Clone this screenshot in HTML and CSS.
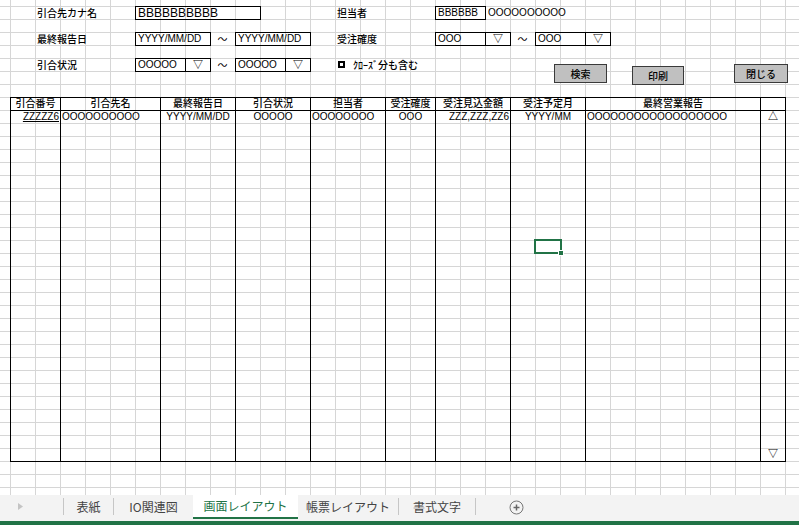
FILE: index.html
```html
<!DOCTYPE html>
<html lang="ja">
<head>
<meta charset="utf-8">
<title>画面レイアウト</title>
<link rel="stylesheet" href="styles.css">
</head>
<body>
<div class="app">
  <div class="sheet">
    <div class="lbl r1 c-left">引合先カナ名</div>
    <div class="box r1 kana big">BBBBBBBBBB</div>
    <div class="lbl r1 c-right">担当者</div>
    <div class="box r1 tanto">BBBBBB</div>
    <div class="txt r1 tanto-name">OOOOOOOOOO</div>

    <div class="lbl r2 c-left">最終報告日</div>
    <div class="box r2 from">YYYY/MM/DD</div>
    <div class="tilde r2 t-left">～</div>
    <div class="box r2 to">YYYY/MM/DD</div>
    <div class="lbl r2 c-right">受注確度</div>
    <div class="box drop r2 from2"><span class="val">OOO</span><span class="arr">▽</span></div>
    <div class="tilde r2 t-right">～</div>
    <div class="box drop r2 to2"><span class="val">OOO</span><span class="arr">▽</span></div>

    <div class="lbl r3 c-left">引合状況</div>
    <div class="box drop r3 from"><span class="val">OOOOO</span><span class="arr">▽</span></div>
    <div class="tilde r3 t-left">～</div>
    <div class="box drop r3 to"><span class="val">OOOOO</span><span class="arr">▽</span></div>
    <div class="lbl r3 check"><span class="cb"></span>ｸﾛｰｽﾞ分も含む</div>

    <button class="btn btn-search">検索</button>
    <button class="btn btn-print">印刷</button>
    <button class="btn btn-close">閉じる</button>

    <div class="list">
      <div class="col w50"><div class="th">引合番号</div><div class="td right"><span class="link">ZZZZZ6</span></div></div>
      <div class="col w100"><div class="th">引合先名</div><div class="td">OOOOOOOOOO</div></div>
      <div class="col w75"><div class="th">最終報告日</div><div class="td center">YYYY/MM/DD</div></div>
      <div class="col w75"><div class="th">引合状況</div><div class="td center">OOOOO</div></div>
      <div class="col w75"><div class="th">担当者</div><div class="td">OOOOOOOO</div></div>
      <div class="col w50"><div class="th">受注確度</div><div class="td center">OOO</div></div>
      <div class="col w75"><div class="th">受注見込金額</div><div class="td right">ZZZ,ZZZ,ZZ6</div></div>
      <div class="col w75"><div class="th">受注予定月</div><div class="td center">YYYY/MM</div></div>
      <div class="col w175"><div class="th">最終営業報告</div><div class="td">OOOOOOOOOOOOOOOOOO</div></div>
      <div class="col last"><div class="th"></div><div class="td center">△</div><div class="fill"></div><div class="td center">▽</div></div>
    </div>

    <div class="selected"><span class="handle"></span></div>
  </div>

  <div class="tabbar">
    <div class="nav">
      <svg width="5" height="7" viewBox="0 0 5 7"><path d="M0 0 L5 3.5 L0 7 Z" fill="#c4c4c4"/></svg>
    </div>
    <span class="sep"></span>
    <div class="tab tab-cover">表紙</div>
    <span class="sep"></span>
    <div class="tab tab-io">IO関連図</div>
    <div class="tab tab-active">画面レイアウト</div>
    <div class="tab tab-form">帳票レイアウト</div>
    <span class="sep"></span>
    <div class="tab tab-style">書式文字</div>
    <span class="sep"></span>
    <div class="add">
      <svg width="15" height="15" viewBox="0 0 15 15"><circle cx="7.5" cy="7.5" r="6.5" fill="none" stroke="#777" stroke-width="1"/><path d="M7.5 4.5 V10.5 M4.5 7.5 H10.5" stroke="#666" stroke-width="1.5"/></svg>
    </div>
  </div>
  <div class="status"></div>
</div>
</body>
</html>
```

FILE: styles.css
```css
* { box-sizing: border-box; }
html, body { margin: 0; padding: 0; }
body {
  width: 799px;
  height: 525px;
  overflow: hidden;
  background: #fff;
  color: #000;
  font-family: "Liberation Sans", "Noto Sans CJK JP", sans-serif;
  font-size: 10px;
}
.app { display: flex; flex-direction: column; height: 525px; }

.sheet {
  position: relative;
  height: 495px;
  flex: none;
  font-weight: 500;
  display: grid;
  grid-template-columns: 10px repeat(31, 25px) 1fr;
  grid-template-rows: 6px repeat(37, 13px) 1fr;
  background-color: #fff;
  background-image:
    linear-gradient(to right, #d6d6d6 1px, transparent 1px),
    linear-gradient(to bottom, #d6d6d6 1px, transparent 1px);
  background-size: 25px 13px;
  background-position: 10px 6px;
}

/* rows */
.r1 { grid-row: 2; }
.r2 { grid-row: 4; }
.r3 { grid-row: 6; }

/* columns */
.c-left { grid-column: 3 / 7; }
.c-right { grid-column: 15 / 19; }
.kana { grid-column: 7 / 12; }
.tanto { grid-column: 19 / 21; }
.tanto-name { grid-column: 21 / 27; }
.from { grid-column: 7 / 10; }
.t-left { grid-column: 10 / 11; }
.to { grid-column: 11 / 14; }
.from2 { grid-column: 19 / 22; }
.t-right { grid-column: 22 / 23; }
.to2 { grid-column: 23 / 26; }
.check { grid-column: 15 / 21; }

.lbl { padding-left: 2px; padding-top: 1px; line-height: 13px; white-space: nowrap; }
.txt { padding-left: 3px; line-height: 13px; white-space: nowrap; }
.tilde { text-align: center; line-height: 13px; font-family: "Noto Sans CJK JP", sans-serif; font-weight: 400; }

.check { display: flex; align-items: center; padding-left: 3px; }
.cb {
  width: 7px;
  height: 7px;
  border: 2px solid #000;
  margin-right: 8px;
  margin-top: -2px;
  flex: none;
}

.box {
  margin: 0 -1px -1px 0;
  border: 1px solid #000;
  padding-left: 2px;
  line-height: 12px;
  white-space: nowrap;
  overflow: hidden;
}
.box.big { font-size: 12px; }
.drop { display: flex; padding-left: 0; }
.drop .val {
  width: 50px;
  padding-left: 2px;
  border-right: 1px solid #000;
}
.drop .arr { flex: 1; text-align: center; }

.btn {
  position: absolute;
  height: 19px;
  padding: 0;
  margin: 0;
  background: #c0c0c0;
  border: 1px solid #3a3a3a;
  border-radius: 0;
  font: inherit;
  font-size: 10px;
  color: #000;
  display: flex;
  align-items: center;
  justify-content: center;
}
.btn-search { left: 554px; top: 64px; width: 53px; }
.btn-print { left: 632px; top: 66px; width: 52px; }
.btn-close { left: 734px; top: 64px; width: 54px; }

.list {
  grid-column: 2 / 33;
  grid-row: 9 / 37;
  margin: 0 -1px -1px 0;
  border: 1px solid #000;
  display: flex;
}
.col {
  display: flex;
  flex-direction: column;
  border-right: 1px solid #000;
  flex: none;
}
.w50 { width: 50px; }
.w75 { width: 75px; }
.w100 { width: 100px; }
.w175 { width: 175px; }
.col.last { flex: 1; border-right: none; }
.th {
  height: 13px;
  border-bottom: 1px solid #000;
  text-align: center;
  line-height: 12px;
  white-space: nowrap;
}
.td {
  height: 13px;
  line-height: 12px;
  padding: 0 1px;
  white-space: nowrap;
  overflow: hidden;
}
.right { text-align: right; }
.center { text-align: center; }
.link { text-decoration: underline; }
.fill { flex: 1; }

.selected {
  grid-column: 23 / 24;
  grid-row: 20 / 21;
  margin: -1px -2px -1px -1px;
  border: 2px solid #217346;
  position: relative;
}
.handle {
  position: absolute;
  right: -4px;
  bottom: -4px;
  width: 6px;
  height: 6px;
  background: #217346;
  border: 1px solid #fff;
}

.tabbar {
  height: 26px;
  flex: none;
  background: #f3f3f3;
  display: flex;
  align-items: flex-start;
  font-family: "Noto Sans CJK JP", sans-serif;
  font-size: 12px;
  color: #444;
}
.nav {
  width: 63px;
  height: 22px;
  display: flex;
  align-items: center;
  padding-left: 18px;
}
.sep {
  width: 1px;
  height: 17px;
  margin-top: 3px;
  background: #c6c6c6;
  flex: none;
}
.tab {
  height: 22px;
  display: flex;
  align-items: center;
  justify-content: center;
  white-space: nowrap;
  flex: none;
}
.tab-cover { width: 49px; }
.tab-io { width: 79px; }
.tab-active {
  width: 105px;
  height: 24px;
  background: #fff;
  color: #217346;
  border-bottom: 2px solid #217346;
  padding-bottom: 1px;
}
.tab-form { width: 100px; }
.tab-style { width: 76px; }
.add {
  height: 26px;
  display: flex;
  align-items: center;
  padding-left: 33px;
  padding-bottom: 1px;
}
.status { height: 4px; flex: none; background: #217346; }
```
